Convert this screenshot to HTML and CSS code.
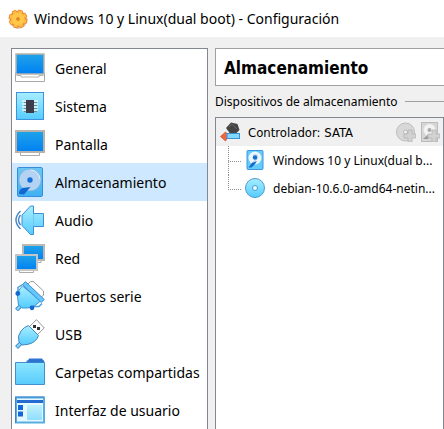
FILE: index.html
```html
<!DOCTYPE html>
<html lang="es">
<head>
<meta charset="utf-8">
<meta name="viewport" content="width=device-width, initial-scale=1">
<title>Windows 10 y Linux(dual boot) - Configuración</title>
<link rel="stylesheet" href="styles.css">
</head>
<body>
<svg class="defs" width="0" height="0" aria-hidden="true">
  <defs>
    <linearGradient id="screen" x1="0" y1="0" x2="0" y2="1"><stop offset="0" stop-color="#20a4e8"/><stop offset="1" stop-color="#0080f4"/></linearGradient>
    <linearGradient id="sky" x1="0" y1="0" x2="0" y2="1"><stop offset="0" stop-color="#a8eeff"/><stop offset="1" stop-color="#55ccff"/></linearGradient>
    <linearGradient id="disk" x1="0" y1="0" x2="0" y2="1"><stop offset="0" stop-color="#6cc8f2"/><stop offset="1" stop-color="#3fb2f0"/></linearGradient>
    <linearGradient id="folder" x1="0" y1="0" x2="0" y2="1"><stop offset="0" stop-color="#8ce6ff"/><stop offset="1" stop-color="#58ccfc"/></linearGradient>
  </defs>
</svg>
<header class="titlebar">
  <svg class="icon-title" viewBox="0 0 20 20" aria-hidden="true">
    <circle cx="10.400" cy="10.700" r="9" fill="#9a8070" opacity=".5"/>
    <circle cx="10" cy="10" r="8.300" fill="#ee8a38"/>
    <circle cx="10" cy="10" r="8.400" fill="none" stroke="#f08428" stroke-width="2.200" stroke-dasharray="4.600 2"/>
    <circle cx="10" cy="10" r="7.600" fill="none" stroke="#ffc040" stroke-width="2" stroke-dasharray="3.600 2.370" stroke-dashoffset="-.5"/>
    <circle cx="10" cy="10" r="6.800" fill="#ffc648"/>
    <circle cx="10" cy="10" r="1.500" fill="#c88a40" stroke="#ee8a20"/>
  </svg>
  <span>Windows 10 y Linux(dual boot) - Configuración</span>
</header>
<main class="window">
  <nav class="sections" aria-label="Secciones">
    <button class="section" type="button">
      <svg class="icon" viewBox="0 0 30 30" aria-hidden="true"><path d="M.5 19.500V28.500H29.500V19.500" fill="#fff" stroke="#a8a8a8"/><path d="M1.500 22.500H6V24H24V22.500H28.500" fill="none" stroke="#b4b4b4"/><rect x="1" y="1" width="28" height="20" fill="url(#screen)" stroke="#b8b2aa" stroke-width="1.500"/></svg>
      <span>General</span>
    </button>
    <button class="section" type="button">
      <svg class="icon" viewBox="0 0 30 30" aria-hidden="true"><rect x="1.500" y="1.500" width="27" height="27" fill="url(#sky)" stroke="#3f92dc"/><path d="M7 10H23M7 13H23M7 16H23M7 19H23" stroke="#e7f4f8" stroke-width="1.500"/><path d="M9 11.500H22M9 14.500H22M9 17.500H22M9 20.500H22" stroke="#6c8794"/><rect x="11" y="9" width="8" height="13" fill="#3c3c4a"/></svg>
      <span>Sistema</span>
    </button>
    <button class="section" type="button">
      <svg class="icon" viewBox="0 0 30 30" aria-hidden="true"><path d="M5.500 23V26.500H24.500V23" fill="#fff" stroke="#aaa"/><rect x="1" y="2" width="28" height="21" fill="url(#screen)" stroke="#b8b2aa" stroke-width="2"/></svg>
      <span>Pantalla</span>
    </button>
    <button class="section selected" type="button" aria-current="page">
      <svg class="icon" viewBox="0 0 30 30" aria-hidden="true"><rect x="2.500" y=".500" width="25" height="29" rx="1.500" fill="url(#disk)" stroke="#368ddd"/><circle cx="15" cy="13" r="11" fill="#b4d2f2" stroke="#71a8dc" stroke-width=".500"/><path d="M16 3a10 10 0 0 1 9 9" stroke="#e2edf8" fill="none"/><circle cx="15" cy="13" r="2.700" fill="#1470d8"/><path d="M15.500 20 9 27.500 4 27Q3.500 23 7.500 21Z" fill="#1267d0"/></svg>
      <span>Almacenamiento</span>
    </button>
    <button class="section" type="button">
      <svg class="icon" viewBox="0 0 30 30" aria-hidden="true"><path d="M5.500 6Q-3.500 15 5.500 24M5.500 10Q1.500 15 5.500 20" fill="none" stroke="#4284c8" stroke-width="1.400"/><path d="M7 10 15.500 1H18.500V8.500H28.500V21.500H18.500V29.500H15.500L7 20.500Z" fill="url(#sky)" stroke="#3f8ed2" stroke-linejoin="round"/><path d="M18.500 9V21" stroke="#72c5ee"/></svg>
      <span>Audio</span>
    </button>
    <button class="section" type="button">
      <svg class="icon" viewBox="0 0 30 30" aria-hidden="true"><path d="M13 17V19.500H26V17" fill="#fff" stroke="#aaa"/><rect x="8" y="2" width="21" height="15" fill="url(#screen)" stroke="#b8b8b4" stroke-width="2"/><path d="M4.500 27V29.500H18.500V27" fill="#fff" stroke="#aaa"/><rect x="1" y="12" width="21" height="15" fill="url(#screen)" stroke="#c4c6c6" stroke-width="2"/></svg>
      <span>Red</span>
    </button>
    <button class="section" type="button">
      <svg class="icon" viewBox="0 0 30 30" aria-hidden="true"><path d="M13 3 15.500.600H18.500L28.500 10V14L26 16.500Z" fill="#fff" stroke="#999"/><path d="M5.500 25 1.500 29" stroke="#3a8cd0" stroke-width="4"/><path d="M5.500 25 2 28.500" stroke="#8edaff" stroke-width="2"/><path d="M7.500 5 25.500 20 20 24.500 13 27H7L3.500 24 2.500 15 4 9Z" fill="url(#sky)" stroke="#3f94d8"/><path d="M3 11V6.500L7.500 3.500M27 22.500 24 25.500H18" fill="none" stroke="#4aa0e0" stroke-width="1.500"/><path d="M7.500 3.500 10.500.700 29.300 18.500 26.300 21.500Z" fill="#64c8fa" stroke="#3f8dd6"/><circle cx="2.800" cy="12.500" r="2.400" fill="#1466d0"/><circle cx="17" cy="26.800" r="2.400" fill="#1466d0"/></svg>
      <span>Puertos serie</span>
    </button>
    <button class="section" type="button">
      <svg class="icon" viewBox="0 0 30 30" aria-hidden="true"><path d="M14.500 7.500 21.500 .700 29.300 9 22.500 15.500Z" fill="#fff" stroke="#999"/><rect x="18" y="6" width="3" height="3" fill="#333"/><rect x="22" y="8" width="3" height="3" fill="#333"/><path d="M6 24 1.500 28.500" stroke="#3c8dcc" stroke-width="4"/><path d="M6 24 2 28" stroke="#8edaff" stroke-width="2"/><path d="M13.500 6.500 23.500 16.500Q21 24 12 25.500L7 26 4 23Q2 17 6 12Q9 8 13.500 6.500Z" fill="url(#sky)" stroke="#4389bd"/></svg>
      <span>USB</span>
    </button>
    <button class="section" type="button">
      <svg class="icon" viewBox="0 0 30 30" aria-hidden="true"><path d="M11.500 7 14 1.500H27L29.500 5V12H11.500Z" fill="#2f73d0"/><path d="M.500 5.500H29.500V27.500H.500Z" fill="url(#folder)" stroke="#458fcb"/><path d="M11.500 4.500H29" stroke="#2f73d0" stroke-width="2"/></svg>
      <span>Carpetas compartidas</span>
    </button>
    <button class="section" type="button">
      <svg class="icon" viewBox="0 0 30 30" aria-hidden="true"><rect x="1" y="2.500" width="28" height="25" fill="#e6f7ff" stroke="#59aee0" stroke-width="2"/><path d="M.500 28V2H29" fill="none" stroke="#3f85c8"/><path d="M2 5H28V8H2Z" fill="#256bd0"/><path d="M3 10H8V15H3ZM3 16.500H8V21.500H3Z" fill="#1268da"/><rect x="12" y="10" width="15" height="15" fill="url(#sky)" opacity=".6"/></svg>
      <span>Interfaz de usuario</span>
    </button>
  </nav>
  <section class="content">
    <h1 class="heading">Almacenamiento</h1>
    <h2 class="group-title">Dispositivos de almacenamiento</h2>
    <div class="tree">
      <div class="controller">
        <svg class="icon-small" viewBox="0 0 20 20" aria-hidden="true"><path d="M6 6 11 .500 17.500 2 19.500 8 16 11.500H10Z" fill="#444"/><path d="M9 5 12 2 17 7" fill="none" stroke="#666"/><path d="M.500 14.500 5.500 10 9 13.500 5.500 19Z" fill="#ee6640" stroke="#c94c32" stroke-width=".700"/><rect x="7" y="11.500" width="12.500" height="5" fill="#7ed8ff" stroke="#3c8fd0"/></svg>
        <span>Controlador: SATA</span>
        <button class="add" type="button" aria-label="Añadir unidad óptica">
          <svg class="icon-small" viewBox="0 0 20 20" aria-hidden="true"><circle cx="9.500" cy="10" r="9" fill="#d8d8d8" stroke="#bdbdbd"/><circle cx="9.500" cy="10" r="2" fill="#eee" stroke="#bbb"/><path d="M12 8H16V12H20V16H16V20H12V16H8V12H12Z" fill="#d2d2d2" stroke="#b5b5b5" stroke-width=".800"/></svg>
        </button>
        <button class="add" type="button" aria-label="Añadir disco duro">
          <svg class="icon-small" viewBox="0 0 20 20" aria-hidden="true"><rect x="1.500" y=".500" width="16" height="19" fill="#d6d6d6" stroke="#bcbcbc"/><circle cx="9.500" cy="8" r="6" fill="#f3f3f3"/><circle cx="9.500" cy="8" r="2" fill="#aaa"/><path d="M3 17 9 12 8 17Z" fill="#999"/><path d="M12 8H16V12H20V16H16V20H12V16H8V12H12Z" fill="#d2d2d2" stroke="#b5b5b5" stroke-width=".800"/></svg>
        </button>
      </div>
      <ul class="devices">
        <li class="device">
          <svg class="icon-small" viewBox="0 0 20 20" aria-hidden="true"><rect x="2" y=".500" width="16" height="19" rx="1" fill="#64ccfa" stroke="#3c97dc"/><circle cx="10" cy="8" r="6.500" fill="#edf6fc"/><path d="M8 5H12V9L7 13" fill="none" stroke="#8ab8dc" stroke-width=".700"/><circle cx="10" cy="7.500" r="2.200" fill="#1470d0"/><path d="M3.500 17.500 7 13 12 11 10 14 6.500 17.500Z" fill="#1267cc"/></svg>
          <span class="name">Windows 10 y Linux(dual b...</span>
        </li>
        <li class="device">
          <svg class="icon-small" viewBox="0 0 20 20" aria-hidden="true"><circle cx="10" cy="10" r="9.500" fill="url(#sky)" stroke="#4c9cd0"/><circle cx="10" cy="10" r="2.500" fill="#e8fbff" stroke="#4c9cd0"/></svg>
          <span class="name">debian-10.6.0-amd64-netin...</span>
        </li>
      </ul>
    </div>
  </section>
</main>
</body>
</html>
```
FILE: styles.css
```css
* {
  box-sizing: border-box;
}

body {
  display: flex;
  flex-direction: column;
  height: 100vh;
  margin: 0;
  overflow: hidden;
  background: #f0f0f0;
  color: #000;
  font-family: "Noto Sans", "Open Sans", sans-serif;
  font-size: 14px;
}

button {
  margin: 0;
  padding: 0;
  border: 0;
  background: none;
  color: inherit;
  font: inherit;
}

.defs {
  position: absolute;
}

.titlebar {
  display: flex;
  flex: none;
  align-items: center;
  gap: 6px;
  height: 37px;
  padding-left: 8px;
  background: #fff;
  white-space: nowrap;
}

.icon-title,
.icon-small {
  display: block;
  flex: none;
  width: 20px;
  height: 20px;
}

.window {
  display: flex;
  flex: 1;
  gap: 7px;
  min-height: 0;
  padding: 11px 0 0 11px;
}

.sections {
  flex: none;
  width: 197px;
  overflow: hidden;
  border: 1px solid #828790;
  border-bottom: 0;
  background: #fff;
}

.section {
  display: flex;
  align-items: center;
  gap: 10px;
  width: 100%;
  height: 38px;
  padding-left: 3px;
  text-align: left;
  white-space: nowrap;
}

.section.selected {
  background: #cde8ff;
}

.icon {
  flex: none;
  width: 30px;
  height: 30px;
}

.content {
  display: flex;
  flex: 1;
  flex-direction: column;
  min-width: 0;
  font-size: 12px;
}

.heading {
  flex: none;
  height: 38px;
  margin: 0;
  padding-left: 8px;
  border: 1px solid #a0a0a0;
  border-right: 0;
  background: #fff;
  font-family: "DejaVu Sans Condensed", "DejaVu Sans", sans-serif;
  font-size: 17px;
  font-weight: 700;
  line-height: 38px;
}

.group-title {
  display: flex;
  flex: none;
  align-items: center;
  gap: 7px;
  height: 31px;
  margin: 0;
  font-size: 12px;
  font-weight: 400;
  white-space: nowrap;
}

.group-title::after {
  flex: 1;
  height: 1px;
  background: #a0a0a0;
  content: "";
}

.tree {
  flex: 1;
  border: 1px solid #828790;
  border-bottom: 0;
  background: #fff;
}

.controller {
  display: flex;
  align-items: center;
  gap: 4px;
  height: 28px;
  padding: 0 3px 0 4px;
  background: #f0f0f0;
  font-family: "DejaVu Sans Condensed", "DejaVu Sans", sans-serif;
  font-size: 13px;
  white-space: nowrap;
}

.controller span {
  flex: 1;
  padding-left: 4px;
}

.devices {
  margin: 0;
  padding: 0 2px 0 12px;
  list-style: none;
}

.device {
  display: flex;
  align-items: center;
  gap: 8px;
  height: 28px;
  white-space: nowrap;
}

/* Dotted branch joining each device to its controller */
.device::before {
  align-self: flex-start;
  width: 12px;
  height: 15px;
  margin-right: -4px;
  border-bottom: 1px dotted #909090;
  border-left: 1px dotted #909090;
  content: "";
}

.device:not(:last-child) {
  background: repeating-linear-gradient(#909090 0 1px, transparent 1px 2px) no-repeat 0 0 / 1px 100%;
}

.device:not(:last-child)::before {
  border-left-color: transparent;
}

.name {
  overflow: hidden;
  text-overflow: ellipsis;
}
```
